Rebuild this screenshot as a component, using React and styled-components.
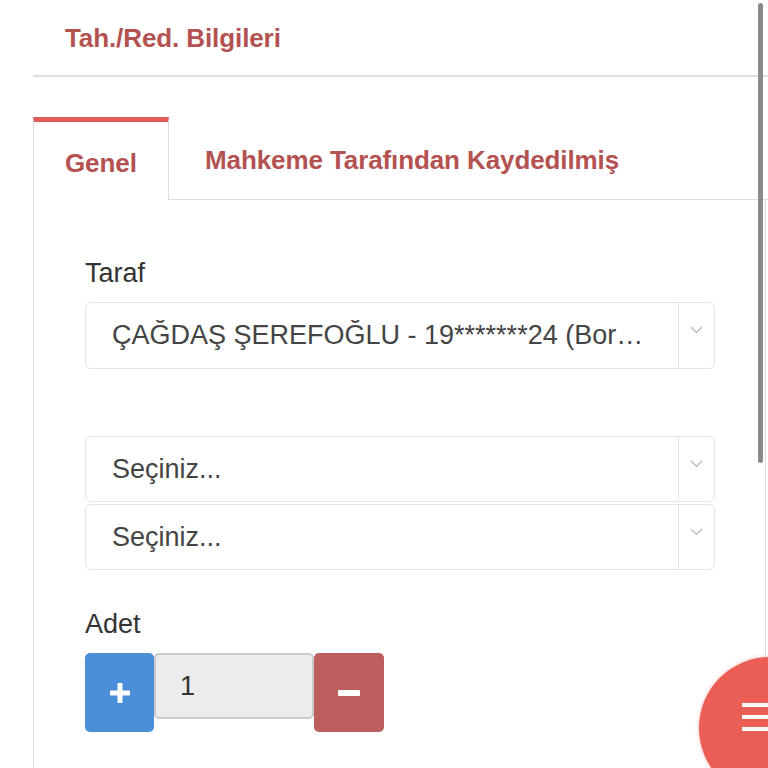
import React from 'react';
import styled, { createGlobalStyle } from 'styled-components';

const GlobalStyle = createGlobalStyle`
  html, body {
    margin: 0;
    padding: 0;
    background: #ffffff;
    font-family: "Liberation Sans", Arial, sans-serif;
    overflow: hidden;
  }
`;

const Page = styled.div`
  padding-left: 33px;
  width: 735px;
  height: 768px;
  overflow: hidden;
`;

const Header = styled.div`
  height: 77px;
  display: flex;
  align-items: center;
  padding: 2px 0 0 32px;
  box-sizing: border-box;
  border-bottom: 2px solid #dedede;
  color: #b45252;
  font-weight: bold;
  font-size: 26px;
  letter-spacing: -0.1px;
`;

const TabRow = styled.div`
  display: flex;
  margin-top: 40px;
`;

const Tab = styled.div`
  display: flex;
  align-items: center;
  height: 83px;
  box-sizing: border-box;
  color: #b45252;
  font-weight: bold;
  font-size: 26px;
  letter-spacing: -0.1px;
  ${({ $active }) =>
    $active
      ? `
    width: 136px;
    padding: 5px 0 0 31px;
    border-top: 5px solid #e25c5c;
    border-left: 1px solid #dddddd;
    border-right: 1px solid #dddddd;
  `
      : `
    flex: 1;
    padding: 5px 0 0 36px;
    border-bottom: 1px solid #dddddd;
  `}
`;

const Panel = styled.div`
  margin-right: 2px;
  border-left: 1px solid #dddddd;
  border-right: 1px solid #dddddd;
  padding: 57px 50px 60px 51px;
  min-height: 600px;
`;

const Label = styled.div`
  font-size: 27px;
  line-height: 32px;
  color: #333333;
  margin: ${({ $top }) => $top || 0}px 0 13px;
`;

const Select = styled.div`
  display: flex;
  height: ${({ $h }) => $h || 66}px;
  box-sizing: border-box;
  border: 1px solid #e4e4e4;
  border-radius: 6px;
  margin-top: ${({ $top }) => $top || 0}px;
  background: #ffffff;
`;

const SelectText = styled.div`
  flex: 1;
  min-width: 0;
  display: flex;
  align-items: center;
  padding: 0 24px 0 26px;
  font-size: 27px;
  color: #444444;
  span {
    white-space: nowrap;
    overflow: hidden;
    text-overflow: ellipsis;
  }
`;

const Arrow = styled.div`
  width: 36px;
  border-left: 1px solid #e4e4e4;
  display: flex;
  justify-content: center;
  padding-top: 23px;
  box-sizing: border-box;
`;

const Stepper = styled.div`
  display: flex;
  align-items: flex-start;
`;

const StepButton = styled.div`
  width: ${({ $w }) => $w}px;
  height: 79px;
  border-radius: 5px;
  background: ${({ $color }) => $color};
  display: flex;
  align-items: center;
  justify-content: center;
`;

const Count = styled.div`
  width: 160px;
  height: 66px;
  box-sizing: border-box;
  background: #ececec;
  border: 2px solid #cbcbcb;
  border-radius: 5px;
  display: flex;
  align-items: center;
  padding-left: 24px;
  font-size: 27px;
  color: #333333;
`;

const Fab = styled.div`
  position: fixed;
  left: 699px;
  top: 657px;
  width: 142px;
  height: 142px;
  border-radius: 50%;
  background: #ea5e56;
  box-shadow: 0 0 4px rgba(234, 94, 86, 0.4);
`;

const FabLine = styled.span`
  position: absolute;
  left: 43px;
  top: ${({ $top }) => $top}px;
  width: 40px;
  height: 4px;
  background: #ffffff;
`;

const ScrollThumb = styled.div`
  position: fixed;
  left: 758px;
  top: 3px;
  width: 5px;
  height: 460px;
  border-radius: 3px;
  background: #8a8a8a;
`;

function Chevron() {
  return (
    <svg width="13" height="8" viewBox="0 0 13 8">
      <path d="M1 1 L6.5 6.5 L12 1" fill="none" stroke="#b5b5b5" strokeWidth="1.2" />
    </svg>
  );
}

function Plus() {
  return (
    <svg width="22" height="22" viewBox="0 0 22 22">
      <rect x="8.5" y="1" width="5" height="20" rx="1" fill="#fff" />
      <rect x="1" y="8.5" width="20" height="5" rx="1" fill="#fff" />
    </svg>
  );
}

function Minus() {
  return (
    <svg width="22" height="6" viewBox="0 0 22 6">
      <rect x="0" y="0" width="22" height="6" rx="1" fill="#fff" />
    </svg>
  );
}

function Dropdown({ text, h, top }) {
  return (
    <Select $h={h} $top={top}>
      <SelectText>
        <span>{text}</span>
      </SelectText>
      <Arrow>
        <Chevron />
      </Arrow>
    </Select>
  );
}

export default function App() {
  return (
    <>
      <GlobalStyle />
      <Page>
        <Header>Tah./Red. Bilgileri</Header>
        <TabRow>
          <Tab $active>Genel</Tab>
          <Tab>Mahkeme Tarafından Kaydedilmiş</Tab>
        </TabRow>
        <Panel>
          <Label>Taraf</Label>
          <Dropdown h={67} text="ÇAĞDAŞ ŞEREFOĞLU - 19*******24 (Borçlu)" />
          <Dropdown top={67} text="Seçiniz..." />
          <Dropdown top={2} text="Seçiniz..." />
          <Label $top={38}>Adet</Label>
          <Stepper>
            <StepButton $w={69} $color="#4a8fd8">
              <Plus />
            </StepButton>
            <Count>1</Count>
            <StepButton $w={70} $color="#bd5f5f">
              <Minus />
            </StepButton>
          </Stepper>
        </Panel>
      </Page>
      <ScrollThumb />
      <Fab>
        <FabLine $top={46} />
        <FabLine $top={58} />
        <FabLine $top={70} />
      </Fab>
    </>
  );
}
